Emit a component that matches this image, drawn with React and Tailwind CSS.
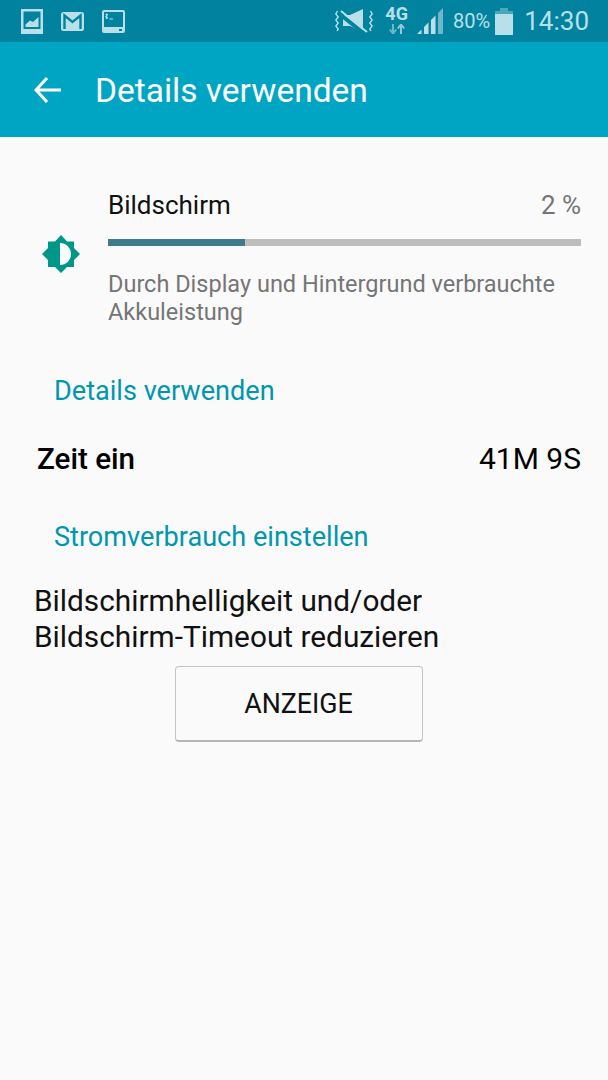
import React from 'react';

const statusColor = '#b9e0e8';
const statusBg = '#01829f';

function PictureIcon() {
  return (
    <svg width="22" height="25" viewBox="0 0 22 25">
      <rect x="0" y="0" width="22" height="25" fill={statusColor} />
      <rect x="2.5" y="2.5" width="17" height="17.5" fill={statusBg} />
      <path d="M4.5 18 L4.5 15.5 L9 11.5 L12 13 L17.5 8 L17.5 18 Z" fill={statusColor} />
    </svg>
  );
}

function MailIcon() {
  return (
    <svg width="23" height="19" viewBox="0 0 23 19">
      <rect x="0" y="0" width="23" height="19" rx="2.5" fill={statusColor} />
      <path d="M3.5 17 L3.5 3.5 L11.5 10 L19.5 3.5 L19.5 17" fill="none" stroke={statusBg} strokeWidth="2.4" />
    </svg>
  );
}

function TerminalIcon() {
  return (
    <svg width="23" height="23" viewBox="0 0 23 23">
      <rect x="0" y="0" width="23" height="23" rx="2" fill={statusColor} />
      <rect x="2" y="2" width="19" height="15" fill={statusBg} />
      <path d="M3.5 4.5 L6 4.5 L3.5 6.5 L6 8 L3.5 8 M4.7 3.5 L4.7 9 M7.5 9 L11 9" stroke={statusColor} strokeWidth="1" fill="none" />
      <rect x="17" y="19" width="3" height="2" fill={statusBg} />
    </svg>
  );
}

function MuteVibrateIcon() {
  return (
    <svg width="38" height="28" viewBox="0 0 38 28">
      <path d="M2.5 4 L0.8 7 L3.2 10 L0.8 13 L3.2 16 L0.8 19 L3.2 22 L2 24" fill="none" stroke={statusColor} strokeWidth="1.4" />
      <path d="M35.5 4 L37.2 7 L34.8 10 L37.2 13 L34.8 16 L37.2 19 L34.8 22 L36 24" fill="none" stroke={statusColor} strokeWidth="1.4" />
      <path d="M8 8 L15 8 L28 2 L28 25 L15 19 L8 19 Z" fill={statusColor} />
      <path d="M4 6.5 L31 28" stroke={statusBg} strokeWidth="4" />
      <path d="M6 4 L32 25" stroke={statusColor} strokeWidth="2" />
    </svg>
  );
}

function NetworkIcon() {
  return (
    <div className="flex flex-col items-center w-[21px] h-[28px]">
      <span className="text-[18px] leading-[14px] font-bold text-[#b9e0e8]">4G</span>
      <svg width="16" height="10" viewBox="0 0 16 10" className="mt-[3px]">
        <path d="M4 9.5 L4 0 M0.8 5.5 L4 9.5 L7.2 5.5" stroke="#6fb7c8" strokeWidth="2" fill="none" />
        <path d="M12 10 L12 0.5 M8.8 4.5 L12 0.5 L15.2 4.5" stroke="#8fcbd8" strokeWidth="2" fill="none" />
      </svg>
    </div>
  );
}

function SignalIcon() {
  return (
    <svg width="27" height="26" viewBox="0 0 27 26">
      <path d="M0 26 L4.5 21.5 L4.5 26 Z" fill={statusColor} />
      <path d="M7 26 L7 19 L11.5 14.5 L11.5 26 Z" fill={statusColor} />
      <path d="M14 26 L14 12 L18.5 7.5 L18.5 26 Z" fill={statusColor} />
      <path d="M21 26 L21 5 L26 0 L26 26 Z" fill="#6fb7c8" />
    </svg>
  );
}

function BatteryIcon() {
  return (
    <svg width="18" height="27" viewBox="0 0 18 27">
      <path d="M5 0 L13 0 L13 3 L18 3 L18 9 L0 9 L0 3 L5 3 Z" fill="#4ea5ba" />
      <rect x="0" y="6" width="18" height="21" fill={statusColor} />
    </svg>
  );
}

function BrightnessIcon() {
  return (
    <svg width="38" height="38" viewBox="0 0 38 38">
      <path
        d="M19 0 L25 6.5 L32 6.5 L32 13 L38 19 L32 25 L32 32 L25 32 L19 38 L13 32 L6 32 L6 25 L0 19 L6 13 L6 6.5 L13 6.5 Z"
        fill="#009688"
      />
      <path d="M18 8 A11 11 0 0 1 18 30 Z" fill="#fafafa" />
    </svg>
  );
}

export default function App() {
  return (
    <div className="w-[608px] h-[1080px] bg-[#fafafa] flex flex-col font-['Roboto',sans-serif]">
      {/* barra de estado */}
      <div className="h-[42px] bg-[#01829f] flex items-center justify-between pl-[21px] pr-[19px]">
        <div className="flex items-center gap-[18px]">
          <PictureIcon />
          <MailIcon />
          <TerminalIcon />
        </div>
        <div className="flex items-center text-[#b9e0e8]">
          <MuteVibrateIcon />
          <div className="ml-[13px]"><NetworkIcon /></div>
          <div className="ml-[10px]"><SignalIcon /></div>
          <span className="ml-[9px] text-[20px] leading-none">80%</span>
          <div className="ml-[5px]"><BatteryIcon /></div>
          <span className="ml-[11px] text-[26px] leading-none">14:30</span>
        </div>
      </div>

      <div className="h-[95px] bg-[#00a5c4] flex items-center text-white">
        <svg width="28" height="26" viewBox="0 0 28 26" className="ml-[34px]">
          <path d="M27 13 L2 13 M13 1 L2 13 L13 25" fill="none" stroke="#fff" strokeWidth="3" />
        </svg>
        <span className="ml-[33px] pt-[2px] text-[33.5px] leading-none">Details verwenden</span>
      </div>

      <div className="flex pt-[52px] pr-[27px]">
        <div className="w-[108px] flex justify-end pr-[28px] pt-[46px] shrink-0">
          <BrightnessIcon />
        </div>
        <div className="flex-1">
          <div className="flex justify-between items-center h-[32px] text-[26px]">
            <span className="text-[#111]">Bildschirm</span>
            <span className="text-[#757575]">2 %</span>
          </div>
          <div className="flex h-[7px] mt-[18px] bg-[#bdbdbd]">
            <div className="w-[137px] bg-[#3c7a8c]"></div>
          </div>
          <p className="mt-[24px] text-[23.5px] leading-[28px] text-[#757575]">
            Durch Display und Hintergrund verbrauchte Akkuleistung
          </p>
        </div>
      </div>

      <div className="mt-[49px] ml-[54px] text-[27.1px] leading-[32px] text-[#0096b0]">Details verwenden</div>

      <div className="mt-[36px] pl-[37px] pr-[27px] flex justify-between items-center text-[30px] leading-[32px] text-black">
        <span className="font-medium text-[29.6px]">Zeit ein</span>
        <span>41M 9S</span>
      </div>

      <div className="mt-[46px] ml-[54px] text-[27.1px] leading-[32px] text-[#0096b0]">Stromverbrauch einstellen</div>

      <p className="mt-[30px] pl-[34px] pr-[100px] text-[29.8px] leading-[36px] text-[#111]">
        Bildschirmhelligkeit und/oder Bildschirm-Timeout reduzieren
      </p>

      <div className="mt-[11px] ml-[175px]">
        <button className="w-[248px] h-[76px] pt-[2px] pr-[1px] flex items-center justify-center rounded-[4px] border border-[#c4c4c4] border-b-2 border-b-[#b5b5b5] bg-[#fafafa] text-[26.8px] text-[#111]">
          ANZEIGE
        </button>
      </div>
    </div>
  );
}
